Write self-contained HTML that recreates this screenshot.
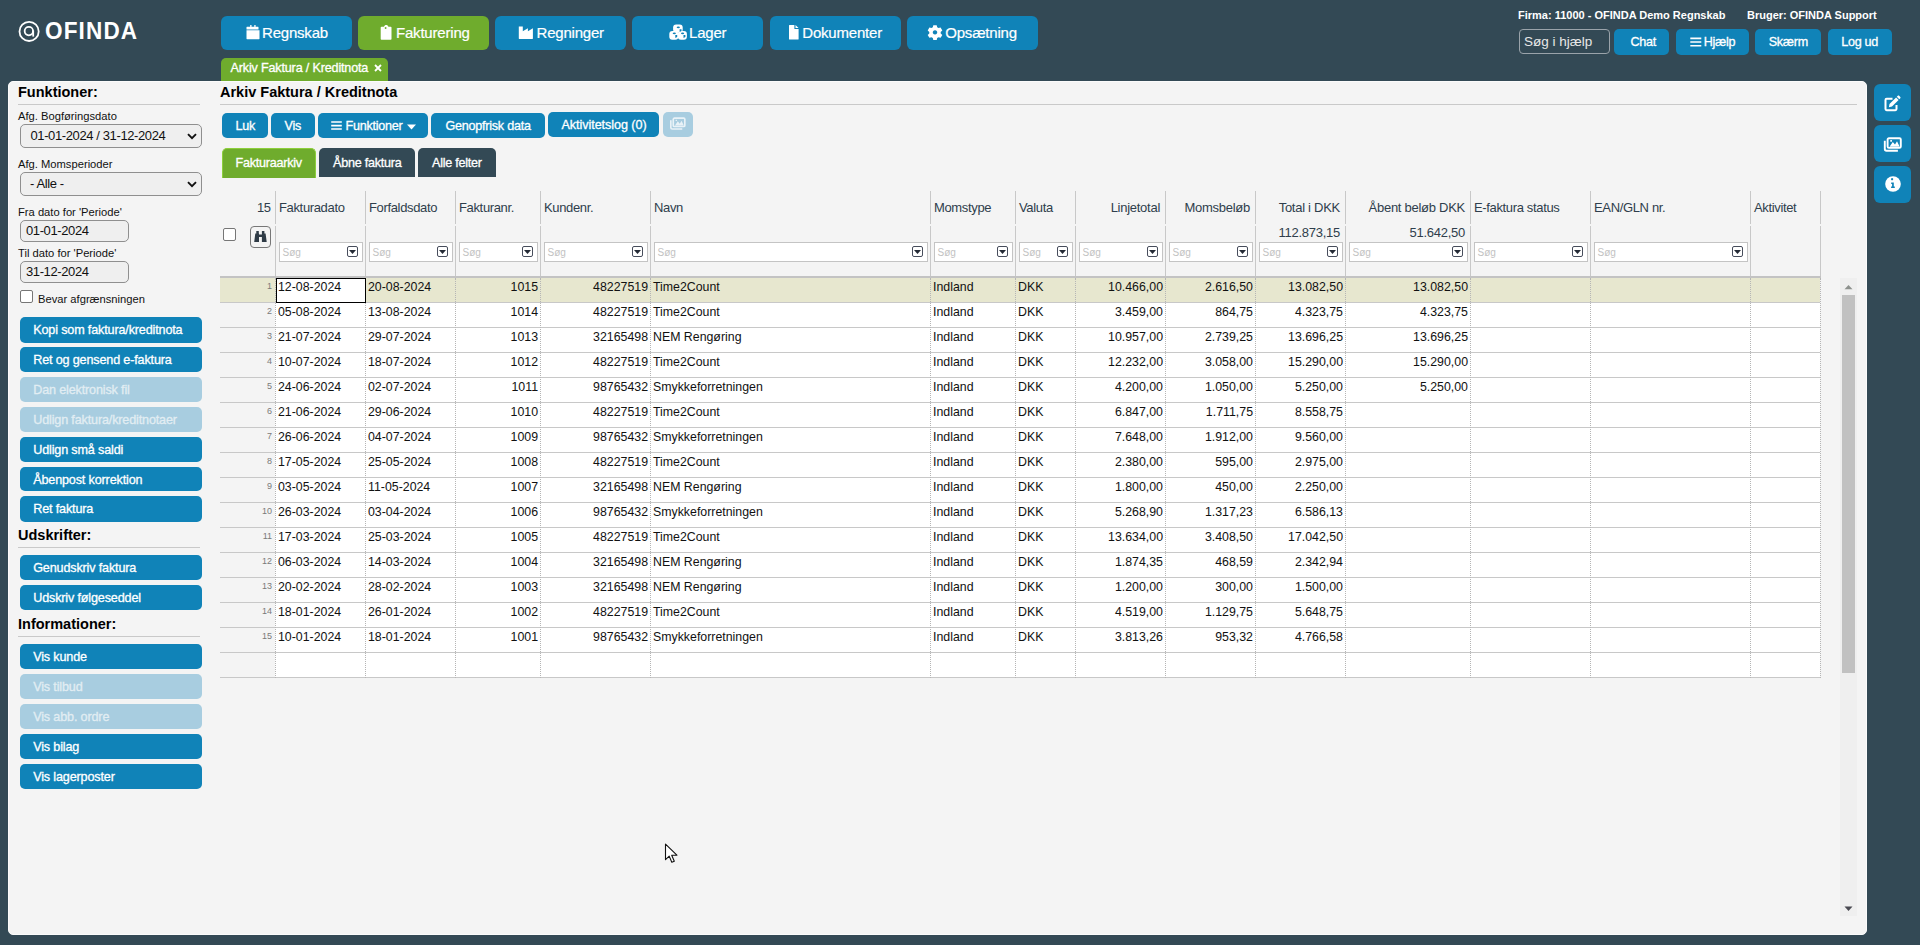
<!DOCTYPE html><html><head><meta charset="utf-8"><style>
*{box-sizing:border-box}
html,body{margin:0;padding:0;width:1920px;height:945px;overflow:hidden;background:#334955;font-family:"Liberation Sans",sans-serif}
.a{position:absolute}
.t{position:absolute;line-height:1;white-space:nowrap}
.w{color:#fff}
.b{font-weight:bold}
</style></head><body>
<svg class="a" style="left:15px;top:18px" width="28" height="28" viewBox="15 18 28 28"><circle cx="29.1" cy="31.4" r="9.6" fill="none" stroke="#fff" stroke-width="1.8"/><circle cx="28.85" cy="31.1" r="4.2" fill="none" stroke="#fff" stroke-width="1.8"/><path d="M33.2 30.5V36.6" stroke="#fff" stroke-width="1.8"/></svg>
<div class="t" style="left:45px;top:18.96px;font-size:24.5px;color:#fff;font-weight:bold;letter-spacing:1.25px;transform:scaleX(0.92);transform-origin:0 0">OFINDA</div>
<div class="a" style="left:221px;top:16px;width:131px;height:34px;border-radius:6px;background:#1083b8"></div>
<div class="a" style="left:245px;top:24px;line-height:0"><svg width="16" height="16" viewBox="0 0 16 16"><path fill="#fff" d="M3 2.75h2.2V1h1.3v1.75h2.8V1h1.3v1.75h2.4c.4 0 .5.2.5.5v2.3H1.5v-2.3c0-.3.1-.5.5-.5H3zM1.5 6.3h13v8.4c0 .3-.2.5-.5.5H2c-.3 0-.5-.2-.5-.5z"/></svg></div>
<div class="t" style="left:262px;top:24.80px;font-size:15px;color:#fff;letter-spacing:-0.2px;-webkit-text-stroke:0.2px #fff">Regnskab</div>
<div class="a" style="left:358px;top:16px;width:131px;height:34px;border-radius:6px;background:#6fac2d"></div>
<div class="a" style="left:378px;top:24px;line-height:0"><svg width="16" height="16" viewBox="0 0 16 16"><path fill="#fff" fill-rule="evenodd" d="M6 2.7C6.4 1.5 7.1 1 8.2 1s1.8.5 2.2 1.7h2.3c.5 0 .8.3.8.8V15c0 .5-.3.8-.8.8H3.5c-.5 0-.8-.3-.8-.8V3.5c0-.5.3-.8.8-.8zM8.5 4a.9.9 0 1 0 0 .01z"/></svg></div>
<div class="t" style="left:396px;top:24.80px;font-size:15px;color:#fff;letter-spacing:-0.2px;-webkit-text-stroke:0.2px #fff">Fakturering</div>
<div class="a" style="left:495px;top:16px;width:131px;height:34px;border-radius:6px;background:#1083b8"></div>
<div class="a" style="left:517px;top:24px;line-height:0"><svg width="16" height="16" viewBox="0 0 16 16"><path fill="#fff" d="M1.8 2.6h4v4.6l5.1-3v3.1l5-3.1v10.2c0 .3-.2.5-.5.5H2.3c-.3 0-.5-.2-.5-.5z"/></svg></div>
<div class="t" style="left:536.5px;top:24.80px;font-size:15px;color:#fff;letter-spacing:-0.2px;-webkit-text-stroke:0.2px #fff">Regninger</div>
<div class="a" style="left:632px;top:16px;width:131px;height:34px;border-radius:6px;background:#1083b8"></div>
<div class="a" style="left:667px;top:22px;line-height:0"><svg width="22" height="20" viewBox="667 22 22 20"><g fill="#fff"><rect x="673.1" y="24.6" width="9.6" height="8" rx="3"/><rect x="669.3" y="30.9" width="9" height="8.9" rx="3"/><rect x="677.9" y="30.9" width="9" height="8.9" rx="3"/></g><g fill="#1083b8"><ellipse cx="678.3" cy="27.3" rx="1.6" ry="0.9"/><ellipse cx="674.3" cy="33.3" rx="1.6" ry="0.9"/><ellipse cx="682.6" cy="33.3" rx="1.6" ry="0.9"/><path d="M679.6 29.2h1.9v1.9l-1.9 1z"/><path d="M675.3 35h1.9v2l-1.9 1z"/><path d="M683.5 35h1.9v2l-1.9 1z"/></g></svg></div>
<div class="t" style="left:689px;top:24.80px;font-size:15px;color:#fff;letter-spacing:-0.2px;-webkit-text-stroke:0.2px #fff">Lager</div>
<div class="a" style="left:770px;top:16px;width:131px;height:34px;border-radius:6px;background:#1083b8"></div>
<div class="a" style="left:786px;top:24px;line-height:0"><svg width="16" height="16" viewBox="0 0 16 16"><path fill="#fff" d="M3.5 1h4.9v4h4.2v9.9c0 .3-.3.6-.6.6H3.5c-.3 0-.5-.3-.5-.6V1.6c0-.3.2-.6.5-.6zM9.5 1l3.1 3H9.5z"/></svg></div>
<div class="t" style="left:802.25px;top:24.80px;font-size:15px;color:#fff;letter-spacing:-0.2px;-webkit-text-stroke:0.2px #fff">Dokumenter</div>
<div class="a" style="left:907px;top:16px;width:131px;height:34px;border-radius:6px;background:#1083b8"></div>
<div class="a" style="left:927px;top:24px;line-height:0"><svg width="16" height="16" viewBox="0 0 16 16"><path fill="#fff" fill-rule="evenodd" d="M6.3 1.2h3.4l.5 2.1 1.3.8 2.1-.6 1.7 2.9-1.6 1.5v1.5l1.6 1.5-1.7 2.9-2.1-.6-1.3.8-.5 2.1H6.3l-.5-2.1-1.3-.8-2.1.6-1.7-2.9 1.6-1.5V7.9L.7 6.4l1.7-2.9 2.1.6 1.3-.8zM8 6.2a2.2 2.2 0 1 0 .01 0z"/></svg></div>
<div class="t" style="left:945.25px;top:24.80px;font-size:15px;color:#fff;letter-spacing:-0.2px;-webkit-text-stroke:0.2px #fff">Opsætning</div>
<div class="a" style="left:221px;top:58px;width:167px;height:23px;background:#6fac2d;border-radius:5px 5px 0 0"></div>
<div class="t" style="left:230.5px;top:61.83px;font-size:12.6px;color:#fff;-webkit-text-stroke:0.3px #fff;letter-spacing:-0.17px">Arkiv Faktura / Kreditnota</div>
<svg class="a" style="left:374px;top:64px" width="8" height="8" viewBox="0 0 8 8"><path d="M1 1L7 7M7 1L1 7" stroke="#fff" stroke-width="1.8"/></svg>
<div class="t" style="left:1518px;top:10.19px;font-size:11px;color:#fff;font-weight:bold">Firma: 11000 - OFINDA Demo Regnskab</div>
<div class="t" style="left:1747px;top:10.19px;font-size:11px;color:#fff;font-weight:bold">Bruger: OFINDA Support</div>
<div class="a" style="left:1519px;top:29px;width:91px;height:25px;border:1px solid #9aa3aa;border-radius:4px"></div>
<div class="t" style="left:1524px;top:34.82px;font-size:13.5px;color:#e8e8e8">Søg i hjælp</div>
<div class="a" style="left:1614px;top:29px;width:55px;height:26px;border-radius:5px;background:#1083b8"></div>
<div class="t" style="left:1630.5px;top:35.83px;font-size:12.6px;color:#fff;-webkit-text-stroke:0.3px #fff;letter-spacing:-0.3px">Chat</div>
<div class="a" style="left:1676px;top:29px;width:73px;height:26px;border-radius:5px;background:#1083b8"></div>
<div class="t" style="left:1703.75px;top:35.83px;font-size:12.6px;color:#fff;-webkit-text-stroke:0.3px #fff;letter-spacing:-0.3px">Hjælp</div>
<div class="a" style="left:1755px;top:29px;width:66px;height:26px;border-radius:5px;background:#1083b8"></div>
<div class="t" style="left:1768.75px;top:35.83px;font-size:12.6px;color:#fff;-webkit-text-stroke:0.3px #fff;letter-spacing:-0.3px">Skærm</div>
<div class="a" style="left:1828px;top:29px;width:64px;height:26px;border-radius:5px;background:#1083b8"></div>
<div class="t" style="left:1841.25px;top:35.83px;font-size:12.6px;color:#fff;-webkit-text-stroke:0.3px #fff;letter-spacing:-0.3px">Log ud</div>
<svg class="a" style="left:1689.5px;top:36.5px" width="12" height="11" viewBox="0 0 12 11"><path d="M0.3 1.4h11M0.3 5h11M0.3 8.7h11" stroke="#fff" stroke-width="1.6"/></svg>
<div class="a" style="left:8px;top:81px;width:1859px;height:854px;background:#f4f4f4;border:1px solid #fbfbfb;border-radius:5px"></div>
<div class="a" style="left:1874px;top:84px;width:37px;height:37px;border-radius:6px;background:#1083b8"></div>
<div class="a" style="left:1883px;top:94.5px;line-height:0"><svg width="18" height="18" viewBox="0 0 18 18"><path d="M9.5 3.8H3.6c-.7 0-1.1.4-1.1 1.1v9.2c0 .7.4 1.1 1.1 1.1h8.8c.7 0 1.1-.4 1.1-1.1V10" fill="none" stroke="#fff" stroke-width="2"/><path fill="#fff" d="M5.9 12.2l.6-3.1 6.6-6.6 2.5 2.5-6.6 6.6zM13.8 1.8l1-1c.4-.4 1-.4 1.3 0l1.2 1.2c.4.4.4.9 0 1.3l-1 1z"/></svg></div>
<div class="a" style="left:1874px;top:125px;width:37px;height:37px;border-radius:6px;background:#1083b8"></div>
<div class="a" style="left:1883px;top:136.5px;line-height:0"><svg width="20" height="16" viewBox="0 0 20 16"><rect x="4.6" y="1.3" width="13.2" height="9.6" rx="1.3" fill="none" stroke="#fff" stroke-width="1.9"/><path fill="#fff" d="M6.5 9.7l3.3-4.8 2.2 2.7 2-3.3 2.7 5.4zM7.3 3.1h1.6v1.6H7.3z"/><path d="M1.8 3.8v8.2c0 1 .6 1.7 1.7 1.7h11.4" fill="none" stroke="#fff" stroke-width="1.9"/></svg></div>
<div class="a" style="left:1874px;top:166px;width:37px;height:37px;border-radius:6px;background:#1083b8"></div>
<div class="a" style="left:1883.5px;top:175px;line-height:0"><svg width="18" height="18" viewBox="0 0 18 18"><circle cx="9" cy="9" r="7.8" fill="#fff"/><path fill="#1083b8" d="M8.1 5.2a1.1 1.1 0 1 1 .01 0zM7.2 7.5h2.6v4h1v1.4H7.1v-1.4h1v-2.6h-.9z"/></svg></div>
<div class="t" style="left:18px;top:84.73px;font-size:14.5px;font-weight:bold;color:#000">Funktioner:</div>
<div class="a" style="left:18px;top:104px;width:182px;height:1px;background:#c9c9c9"></div>
<div class="t" style="left:18px;top:111.02px;font-size:11.2px;color:#111">Afg. Bogføringsdato</div>
<div class="a" style="left:20px;top:124px;width:182px;height:24px;border:1px solid #8f8f8f;border-radius:5px;background:#efefef"></div><div class="t" style="left:30.5px;top:128.50px;font-size:13px;color:#111;letter-spacing:-0.39px">01-01-2024 / 31-12-2024</div><div class="a" style="left:187px;top:132.5px;line-height:0"><svg width="10" height="7" viewBox="0 0 10 7"><path d="M1 1.2l4 4 4-4" fill="none" stroke="#111" stroke-width="1.9"/></svg></div>
<div class="t" style="left:18px;top:159.27px;font-size:11.2px;color:#111">Afg. Momsperioder</div>
<div class="a" style="left:20px;top:172px;width:182px;height:24px;border:1px solid #8f8f8f;border-radius:5px;background:#efefef"></div><div class="t" style="left:30px;top:176.50px;font-size:13px;color:#111;letter-spacing:-0.39px">- Alle -</div><div class="a" style="left:187px;top:180.5px;line-height:0"><svg width="10" height="7" viewBox="0 0 10 7"><path d="M1 1.2l4 4 4-4" fill="none" stroke="#111" stroke-width="1.9"/></svg></div>
<div class="t" style="left:18px;top:207.02px;font-size:11.2px;color:#111">Fra dato for 'Periode'</div>
<div class="a" style="left:20px;top:220px;width:109px;height:22px;border:1px solid #8f8f8f;border-radius:5px;background:#efefef"></div><div class="t" style="left:26px;top:223.50px;font-size:13px;color:#111;letter-spacing:-0.39px">01-01-2024</div>
<div class="t" style="left:18px;top:248.02px;font-size:11.2px;color:#111">Til dato for 'Periode'</div>
<div class="a" style="left:20px;top:261px;width:109px;height:22px;border:1px solid #8f8f8f;border-radius:5px;background:#efefef"></div><div class="t" style="left:26px;top:264.50px;font-size:13px;color:#111;letter-spacing:-0.39px">31-12-2024</div>
<div class="a" style="left:20px;top:290px;width:13px;height:13px;border:1px solid #767676;border-radius:2px;background:#fff"></div>
<div class="t" style="left:38px;top:293.77px;font-size:11.2px;color:#111">Bevar afgrænsningen</div>
<div class="a" style="left:20px;top:317px;width:182px;height:26px;border-radius:5px;background:#1083b8"></div><div class="t" style="left:33.2px;top:323.93px;font-size:12.6px;color:#fff;-webkit-text-stroke:0.3px #fff;letter-spacing:-0.15px">Kopi som faktura/kreditnota</div>
<div class="a" style="left:20px;top:347px;width:182px;height:25px;border-radius:5px;background:#1083b8"></div><div class="t" style="left:33.2px;top:353.93px;font-size:12.6px;color:#fff;-webkit-text-stroke:0.3px #fff;letter-spacing:-0.15px">Ret og gensend e-faktura</div>
<div class="a" style="left:20px;top:377px;width:182px;height:25px;border-radius:5px;background:#a8cde0"></div><div class="t" style="left:33.2px;top:383.93px;font-size:12.6px;color:#e2edf3;-webkit-text-stroke:0.3px #e2edf3;letter-spacing:-0.15px">Dan elektronisk fil</div>
<div class="a" style="left:20px;top:407px;width:182px;height:25px;border-radius:5px;background:#a8cde0"></div><div class="t" style="left:33.2px;top:413.93px;font-size:12.6px;color:#e2edf3;-webkit-text-stroke:0.3px #e2edf3;letter-spacing:-0.15px">Udlign faktura/kreditnotaer</div>
<div class="a" style="left:20px;top:437px;width:182px;height:25px;border-radius:5px;background:#1083b8"></div><div class="t" style="left:33.2px;top:443.93px;font-size:12.6px;color:#fff;-webkit-text-stroke:0.3px #fff;letter-spacing:-0.15px">Udlign små saldi</div>
<div class="a" style="left:20px;top:467px;width:182px;height:24px;border-radius:5px;background:#1083b8"></div><div class="t" style="left:33.2px;top:473.93px;font-size:12.6px;color:#fff;-webkit-text-stroke:0.3px #fff;letter-spacing:-0.15px">Åbenpost korrektion</div>
<div class="a" style="left:20px;top:496px;width:182px;height:26px;border-radius:5px;background:#1083b8"></div><div class="t" style="left:33.2px;top:502.93px;font-size:12.6px;color:#fff;-webkit-text-stroke:0.3px #fff;letter-spacing:-0.15px">Ret faktura</div>
<div class="t" style="left:18px;top:528.23px;font-size:14.5px;font-weight:bold;color:#000">Udskrifter:</div>
<div class="a" style="left:18px;top:547px;width:182px;height:1px;background:#c9c9c9"></div>
<div class="a" style="left:20px;top:555px;width:182px;height:25px;border-radius:5px;background:#1083b8"></div><div class="t" style="left:33.2px;top:561.93px;font-size:12.6px;color:#fff;-webkit-text-stroke:0.3px #fff;letter-spacing:-0.15px">Genudskriv faktura</div>
<div class="a" style="left:20px;top:585px;width:182px;height:25px;border-radius:5px;background:#1083b8"></div><div class="t" style="left:33.2px;top:591.93px;font-size:12.6px;color:#fff;-webkit-text-stroke:0.3px #fff;letter-spacing:-0.15px">Udskriv følgeseddel</div>
<div class="t" style="left:18px;top:616.73px;font-size:14.5px;font-weight:bold;color:#000">Informationer:</div>
<div class="a" style="left:18px;top:636px;width:182px;height:1px;background:#c9c9c9"></div>
<div class="a" style="left:20px;top:644px;width:182px;height:25px;border-radius:5px;background:#1083b8"></div><div class="t" style="left:33.2px;top:650.93px;font-size:12.6px;color:#fff;-webkit-text-stroke:0.3px #fff;letter-spacing:-0.15px">Vis kunde</div>
<div class="a" style="left:20px;top:674px;width:182px;height:25px;border-radius:5px;background:#a8cde0"></div><div class="t" style="left:33.2px;top:680.93px;font-size:12.6px;color:#e2edf3;-webkit-text-stroke:0.3px #e2edf3;letter-spacing:-0.15px">Vis tilbud</div>
<div class="a" style="left:20px;top:704px;width:182px;height:25px;border-radius:5px;background:#a8cde0"></div><div class="t" style="left:33.2px;top:710.93px;font-size:12.6px;color:#e2edf3;-webkit-text-stroke:0.3px #e2edf3;letter-spacing:-0.15px">Vis abb. ordre</div>
<div class="a" style="left:20px;top:734px;width:182px;height:25px;border-radius:5px;background:#1083b8"></div><div class="t" style="left:33.2px;top:740.93px;font-size:12.6px;color:#fff;-webkit-text-stroke:0.3px #fff;letter-spacing:-0.15px">Vis bilag</div>
<div class="a" style="left:20px;top:764px;width:182px;height:25px;border-radius:5px;background:#1083b8"></div><div class="t" style="left:33.2px;top:770.93px;font-size:12.6px;color:#fff;-webkit-text-stroke:0.3px #fff;letter-spacing:-0.15px">Vis lagerposter</div>
<div class="t" style="left:220px;top:84.73px;font-size:14.5px;font-weight:bold;color:#000">Arkiv Faktura / Kreditnota</div>
<div class="a" style="left:220px;top:104px;width:1637px;height:1px;background:#c9c9c9"></div>
<div class="a" style="left:222px;top:113px;width:46px;height:25px;border-radius:5px;background:#1083b8"></div><div class="t" style="left:235.5px;top:119.93px;font-size:12.6px;color:#fff;-webkit-text-stroke:0.3px #fff;letter-spacing:-0.25px">Luk</div>
<div class="a" style="left:271px;top:113px;width:44px;height:25px;border-radius:5px;background:#1083b8"></div><div class="t" style="left:284.5px;top:119.93px;font-size:12.6px;color:#fff;-webkit-text-stroke:0.3px #fff;letter-spacing:-0.25px">Vis</div>
<div class="a" style="left:318px;top:113px;width:110px;height:25px;border-radius:5px;background:#1083b8"></div><div class="t" style="left:345.5px;top:119.93px;font-size:12.6px;color:#fff;-webkit-text-stroke:0.3px #fff;letter-spacing:-0.25px">Funktioner</div>
<svg class="a" style="left:331px;top:120px" width="11" height="11" viewBox="0 0 11 11"><path d="M0.2 2h10.6M0.2 5.6h10.6M0.2 9h10.6" stroke="#fff" stroke-width="1.6"/></svg>
<svg class="a" style="left:406.5px;top:123.7px" width="9" height="6" viewBox="0 0 9 6"><path d="M0 0.5h9L4.5 5.5z" fill="#fff"/></svg>
<div class="a" style="left:431px;top:113px;width:114px;height:25px;border-radius:5px;background:#1083b8"></div><div class="t" style="left:445.5px;top:119.93px;font-size:12.6px;color:#fff;-webkit-text-stroke:0.3px #fff;letter-spacing:-0.25px">Genopfrisk data</div>
<div class="a" style="left:548px;top:112px;width:111px;height:25px;border-radius:5px;background:#1083b8"></div><div class="t" style="left:561.5px;top:118.93px;font-size:12.6px;color:#fff;-webkit-text-stroke:0.3px #fff;letter-spacing:-0.06px">Aktivitetslog (0)</div>
<div class="a" style="left:663px;top:112px;width:30px;height:25px;border-radius:5px;background:#a8cde0"></div>
<div class="a" style="left:669px;top:117px;line-height:0;opacity:0.75"><svg width="18" height="14" viewBox="0 0 20 16"><rect x="4.6" y="1.3" width="13.2" height="9.6" rx="1.3" fill="none" stroke="#fff" stroke-width="1.9"/><path fill="#fff" d="M6.5 9.7l3.3-4.8 2.2 2.7 2-3.3 2.7 5.4zM7.3 3.1h1.6v1.6H7.3z"/><path d="M1.8 3.8v8.2c0 1 .6 1.7 1.7 1.7h11.4" fill="none" stroke="#fff" stroke-width="1.9"/></svg></div>
<div class="a" style="left:222px;top:148px;width:94px;height:30px;border-radius:5px 5px 0 0;background:#6fac2d;border:1px solid #8dcf3c;border-bottom:none"></div>
<div class="t" style="left:235.5px;top:156.73px;font-size:12.6px;color:#fff;-webkit-text-stroke:0.3px #fff;letter-spacing:-0.25px">Fakturaarkiv</div>
<div class="a" style="left:319px;top:148px;width:96px;height:29px;border-radius:5px 5px 0 0;background:#334955"></div>
<div class="t" style="left:333px;top:156.73px;font-size:12.6px;color:#fff;-webkit-text-stroke:0.3px #fff;letter-spacing:-0.25px">Åbne faktura</div>
<div class="a" style="left:418px;top:148px;width:78px;height:29px;border-radius:5px 5px 0 0;background:#334955"></div>
<div class="t" style="left:432px;top:156.73px;font-size:12.6px;color:#fff;-webkit-text-stroke:0.3px #fff;letter-spacing:-0.25px">Alle felter</div>
<div class="a" style="left:275px;top:191px;width:1px;height:33px;background:#c8c8c8"></div>
<div class="a" style="left:275px;top:226px;width:1px;height:50px;background:#c8c8c8"></div>
<div class="a" style="left:365px;top:191px;width:1px;height:33px;background:#c8c8c8"></div>
<div class="a" style="left:365px;top:226px;width:1px;height:50px;background:#c8c8c8"></div>
<div class="a" style="left:455px;top:191px;width:1px;height:33px;background:#c8c8c8"></div>
<div class="a" style="left:455px;top:226px;width:1px;height:50px;background:#c8c8c8"></div>
<div class="a" style="left:540px;top:191px;width:1px;height:33px;background:#c8c8c8"></div>
<div class="a" style="left:540px;top:226px;width:1px;height:50px;background:#c8c8c8"></div>
<div class="a" style="left:650px;top:191px;width:1px;height:33px;background:#c8c8c8"></div>
<div class="a" style="left:650px;top:226px;width:1px;height:50px;background:#c8c8c8"></div>
<div class="a" style="left:930px;top:191px;width:1px;height:33px;background:#c8c8c8"></div>
<div class="a" style="left:930px;top:226px;width:1px;height:50px;background:#c8c8c8"></div>
<div class="a" style="left:1015px;top:191px;width:1px;height:33px;background:#c8c8c8"></div>
<div class="a" style="left:1015px;top:226px;width:1px;height:50px;background:#c8c8c8"></div>
<div class="a" style="left:1075px;top:191px;width:1px;height:33px;background:#c8c8c8"></div>
<div class="a" style="left:1075px;top:226px;width:1px;height:50px;background:#c8c8c8"></div>
<div class="a" style="left:1165px;top:191px;width:1px;height:33px;background:#c8c8c8"></div>
<div class="a" style="left:1165px;top:226px;width:1px;height:50px;background:#c8c8c8"></div>
<div class="a" style="left:1255px;top:191px;width:1px;height:33px;background:#c8c8c8"></div>
<div class="a" style="left:1255px;top:226px;width:1px;height:50px;background:#c8c8c8"></div>
<div class="a" style="left:1345px;top:191px;width:1px;height:33px;background:#c8c8c8"></div>
<div class="a" style="left:1345px;top:226px;width:1px;height:50px;background:#c8c8c8"></div>
<div class="a" style="left:1470px;top:191px;width:1px;height:33px;background:#c8c8c8"></div>
<div class="a" style="left:1470px;top:226px;width:1px;height:50px;background:#c8c8c8"></div>
<div class="a" style="left:1590px;top:191px;width:1px;height:33px;background:#c8c8c8"></div>
<div class="a" style="left:1590px;top:226px;width:1px;height:50px;background:#c8c8c8"></div>
<div class="a" style="left:1750px;top:191px;width:1px;height:33px;background:#c8c8c8"></div>
<div class="a" style="left:1750px;top:226px;width:1px;height:50px;background:#c8c8c8"></div>
<div class="a" style="left:1820px;top:191px;width:1px;height:33px;background:#c8c8c8"></div>
<div class="a" style="left:1820px;top:226px;width:1px;height:50px;background:#c8c8c8"></div>
<div class="t" style="left:257px;top:201.25px;font-size:13px;color:#2f3e4c;letter-spacing:-0.6px">15</div>
<div class="a" style="left:223px;top:228px;width:13px;height:13px;border:1px solid #767676;border-radius:2px;background:#fff"></div>
<div class="a" style="left:250px;top:226px;width:21px;height:22px;border:1px solid #777;border-radius:4px"></div>
<svg class="a" style="left:254px;top:231px" width="13" height="11" viewBox="0 0 13 11"><path fill="#2f3b46" d="M2.3 0H4.8V2.6H2.3zM1.3 2.6H5V11H0.2zM7.9 0H10.4V2.6H7.9zM7.9 2.6H11.6L12.7 11H7.9zM5 3.6H7.9V5.9H5z"/></svg>
<div class="t" style="left:279px;top:201.25px;font-size:13px;color:#2f3e4c;letter-spacing:-0.35px">Fakturadato</div>
<div class="a" style="left:279px;top:242px;width:84px;height:20px;border:1px solid #c4c4c4;background:#fff"></div>
<div class="t" style="left:282.5px;top:247.78px;font-size:10px;color:#c2c2c2">Søg</div>
<div class="a" style="left:347px;top:246px;width:11px;height:11px;border:1px solid #474d5c;border-radius:2px;background:#fff"></div>
<svg class="a" style="left:349px;top:250px" width="7" height="4" viewBox="0 0 7 4"><path d="M0 0h7L3.5 4z" fill="#242a35"/></svg>
<div class="t" style="left:369px;top:201.25px;font-size:13px;color:#2f3e4c;letter-spacing:-0.35px">Forfaldsdato</div>
<div class="a" style="left:369px;top:242px;width:84px;height:20px;border:1px solid #c4c4c4;background:#fff"></div>
<div class="t" style="left:372.5px;top:247.78px;font-size:10px;color:#c2c2c2">Søg</div>
<div class="a" style="left:437px;top:246px;width:11px;height:11px;border:1px solid #474d5c;border-radius:2px;background:#fff"></div>
<svg class="a" style="left:439px;top:250px" width="7" height="4" viewBox="0 0 7 4"><path d="M0 0h7L3.5 4z" fill="#242a35"/></svg>
<div class="t" style="left:459px;top:201.25px;font-size:13px;color:#2f3e4c;letter-spacing:-0.35px">Fakturanr.</div>
<div class="a" style="left:459px;top:242px;width:79px;height:20px;border:1px solid #c4c4c4;background:#fff"></div>
<div class="t" style="left:462.5px;top:247.78px;font-size:10px;color:#c2c2c2">Søg</div>
<div class="a" style="left:522px;top:246px;width:11px;height:11px;border:1px solid #474d5c;border-radius:2px;background:#fff"></div>
<svg class="a" style="left:524px;top:250px" width="7" height="4" viewBox="0 0 7 4"><path d="M0 0h7L3.5 4z" fill="#242a35"/></svg>
<div class="t" style="left:544px;top:201.25px;font-size:13px;color:#2f3e4c;letter-spacing:-0.35px">Kundenr.</div>
<div class="a" style="left:544px;top:242px;width:104px;height:20px;border:1px solid #c4c4c4;background:#fff"></div>
<div class="t" style="left:547.5px;top:247.78px;font-size:10px;color:#c2c2c2">Søg</div>
<div class="a" style="left:632px;top:246px;width:11px;height:11px;border:1px solid #474d5c;border-radius:2px;background:#fff"></div>
<svg class="a" style="left:634px;top:250px" width="7" height="4" viewBox="0 0 7 4"><path d="M0 0h7L3.5 4z" fill="#242a35"/></svg>
<div class="t" style="left:654px;top:201.25px;font-size:13px;color:#2f3e4c;letter-spacing:-0.35px">Navn</div>
<div class="a" style="left:654px;top:242px;width:274px;height:20px;border:1px solid #c4c4c4;background:#fff"></div>
<div class="t" style="left:657.5px;top:247.78px;font-size:10px;color:#c2c2c2">Søg</div>
<div class="a" style="left:912px;top:246px;width:11px;height:11px;border:1px solid #474d5c;border-radius:2px;background:#fff"></div>
<svg class="a" style="left:914px;top:250px" width="7" height="4" viewBox="0 0 7 4"><path d="M0 0h7L3.5 4z" fill="#242a35"/></svg>
<div class="t" style="left:934px;top:201.25px;font-size:13px;color:#2f3e4c;letter-spacing:-0.35px">Momstype</div>
<div class="a" style="left:934px;top:242px;width:79px;height:20px;border:1px solid #c4c4c4;background:#fff"></div>
<div class="t" style="left:937.5px;top:247.78px;font-size:10px;color:#c2c2c2">Søg</div>
<div class="a" style="left:997px;top:246px;width:11px;height:11px;border:1px solid #474d5c;border-radius:2px;background:#fff"></div>
<svg class="a" style="left:999px;top:250px" width="7" height="4" viewBox="0 0 7 4"><path d="M0 0h7L3.5 4z" fill="#242a35"/></svg>
<div class="t" style="left:1019px;top:201.25px;font-size:13px;color:#2f3e4c;letter-spacing:-0.35px">Valuta</div>
<div class="a" style="left:1019px;top:242px;width:54px;height:20px;border:1px solid #c4c4c4;background:#fff"></div>
<div class="t" style="left:1022.5px;top:247.78px;font-size:10px;color:#c2c2c2">Søg</div>
<div class="a" style="left:1057px;top:246px;width:11px;height:11px;border:1px solid #474d5c;border-radius:2px;background:#fff"></div>
<svg class="a" style="left:1059px;top:250px" width="7" height="4" viewBox="0 0 7 4"><path d="M0 0h7L3.5 4z" fill="#242a35"/></svg>
<div class="t" style="left:1075px;top:201.25px;font-size:13px;width:85px;text-align:right;color:#2f3e4c;letter-spacing:-0.27px">Linjetotal</div>
<div class="a" style="left:1079px;top:242px;width:84px;height:20px;border:1px solid #c4c4c4;background:#fff"></div>
<div class="t" style="left:1082.5px;top:247.78px;font-size:10px;color:#c2c2c2">Søg</div>
<div class="a" style="left:1147px;top:246px;width:11px;height:11px;border:1px solid #474d5c;border-radius:2px;background:#fff"></div>
<svg class="a" style="left:1149px;top:250px" width="7" height="4" viewBox="0 0 7 4"><path d="M0 0h7L3.5 4z" fill="#242a35"/></svg>
<div class="t" style="left:1165px;top:201.25px;font-size:13px;width:85px;text-align:right;color:#2f3e4c;letter-spacing:-0.27px">Momsbeløb</div>
<div class="a" style="left:1169px;top:242px;width:84px;height:20px;border:1px solid #c4c4c4;background:#fff"></div>
<div class="t" style="left:1172.5px;top:247.78px;font-size:10px;color:#c2c2c2">Søg</div>
<div class="a" style="left:1237px;top:246px;width:11px;height:11px;border:1px solid #474d5c;border-radius:2px;background:#fff"></div>
<svg class="a" style="left:1239px;top:250px" width="7" height="4" viewBox="0 0 7 4"><path d="M0 0h7L3.5 4z" fill="#242a35"/></svg>
<div class="t" style="left:1255px;top:201.25px;font-size:13px;width:85px;text-align:right;color:#2f3e4c;letter-spacing:-0.27px">Total i DKK</div>
<div class="t" style="left:1255px;top:226.00px;font-size:13px;width:85px;text-align:right;color:#2f3e4c;letter-spacing:-0.27px">112.873,15</div>
<div class="a" style="left:1259px;top:242px;width:84px;height:20px;border:1px solid #c4c4c4;background:#fff"></div>
<div class="t" style="left:1262.5px;top:247.78px;font-size:10px;color:#c2c2c2">Søg</div>
<div class="a" style="left:1327px;top:246px;width:11px;height:11px;border:1px solid #474d5c;border-radius:2px;background:#fff"></div>
<svg class="a" style="left:1329px;top:250px" width="7" height="4" viewBox="0 0 7 4"><path d="M0 0h7L3.5 4z" fill="#242a35"/></svg>
<div class="t" style="left:1345px;top:201.25px;font-size:13px;width:120px;text-align:right;color:#2f3e4c;letter-spacing:-0.27px">Åbent beløb DKK</div>
<div class="t" style="left:1345px;top:226.00px;font-size:13px;width:120px;text-align:right;color:#2f3e4c;letter-spacing:-0.27px">51.642,50</div>
<div class="a" style="left:1349px;top:242px;width:119px;height:20px;border:1px solid #c4c4c4;background:#fff"></div>
<div class="t" style="left:1352.5px;top:247.78px;font-size:10px;color:#c2c2c2">Søg</div>
<div class="a" style="left:1452px;top:246px;width:11px;height:11px;border:1px solid #474d5c;border-radius:2px;background:#fff"></div>
<svg class="a" style="left:1454px;top:250px" width="7" height="4" viewBox="0 0 7 4"><path d="M0 0h7L3.5 4z" fill="#242a35"/></svg>
<div class="t" style="left:1474px;top:201.25px;font-size:13px;color:#2f3e4c;letter-spacing:-0.35px">E-faktura status</div>
<div class="a" style="left:1474px;top:242px;width:114px;height:20px;border:1px solid #c4c4c4;background:#fff"></div>
<div class="t" style="left:1477.5px;top:247.78px;font-size:10px;color:#c2c2c2">Søg</div>
<div class="a" style="left:1572px;top:246px;width:11px;height:11px;border:1px solid #474d5c;border-radius:2px;background:#fff"></div>
<svg class="a" style="left:1574px;top:250px" width="7" height="4" viewBox="0 0 7 4"><path d="M0 0h7L3.5 4z" fill="#242a35"/></svg>
<div class="t" style="left:1594px;top:201.25px;font-size:13px;color:#2f3e4c;letter-spacing:-0.35px">EAN/GLN nr.</div>
<div class="a" style="left:1594px;top:242px;width:154px;height:20px;border:1px solid #c4c4c4;background:#fff"></div>
<div class="t" style="left:1597.5px;top:247.78px;font-size:10px;color:#c2c2c2">Søg</div>
<div class="a" style="left:1732px;top:246px;width:11px;height:11px;border:1px solid #474d5c;border-radius:2px;background:#fff"></div>
<svg class="a" style="left:1734px;top:250px" width="7" height="4" viewBox="0 0 7 4"><path d="M0 0h7L3.5 4z" fill="#242a35"/></svg>
<div class="t" style="left:1754px;top:201.25px;font-size:13px;color:#2f3e4c;letter-spacing:-0.35px">Aktivitet</div>
<div class="a" style="left:220px;top:276px;width:1601px;height:2px;background:#c3c3c3"></div>
<div class="a" style="left:220px;top:278px;width:1600px;height:24px;background:#e7e7cf"></div>
<div class="a" style="left:220px;top:302px;width:1600px;height:1px;background:#c8c8c8"></div>
<div class="t" style="left:220px;top:281.63px;font-size:9px;width:52px;text-align:right;color:#7a7a7a">1</div>
<div class="t" style="left:278px;top:281.05px;font-size:12.35px;color:#111">12-08-2024</div>
<div class="t" style="left:368px;top:281.05px;font-size:12.35px;color:#111">20-08-2024</div>
<div class="t" style="left:455px;top:281.05px;font-size:12.35px;width:83px;text-align:right;color:#111">1015</div>
<div class="t" style="left:540px;top:281.05px;font-size:12.35px;width:108px;text-align:right;color:#111">48227519</div>
<div class="t" style="left:653px;top:281.05px;font-size:12.35px;color:#111">Time2Count</div>
<div class="t" style="left:933px;top:281.05px;font-size:12.35px;color:#111">Indland</div>
<div class="t" style="left:1018px;top:281.05px;font-size:12.35px;color:#111">DKK</div>
<div class="t" style="left:1075px;top:281.05px;font-size:12.35px;width:88px;text-align:right;color:#111">10.466,00</div>
<div class="t" style="left:1165px;top:281.05px;font-size:12.35px;width:88px;text-align:right;color:#111">2.616,50</div>
<div class="t" style="left:1255px;top:281.05px;font-size:12.35px;width:88px;text-align:right;color:#111">13.082,50</div>
<div class="t" style="left:1345px;top:281.05px;font-size:12.35px;width:123px;text-align:right;color:#111">13.082,50</div>
<div class="a" style="left:220px;top:303px;width:1600px;height:24px;background:#fff"></div>
<div class="a" style="left:220px;top:303px;width:55px;height:24px;background:#f4f4f4"></div>
<div class="a" style="left:220px;top:327px;width:1600px;height:1px;background:#c8c8c8"></div>
<div class="t" style="left:220px;top:306.63px;font-size:9px;width:52px;text-align:right;color:#7a7a7a">2</div>
<div class="t" style="left:278px;top:306.05px;font-size:12.35px;color:#111">05-08-2024</div>
<div class="t" style="left:368px;top:306.05px;font-size:12.35px;color:#111">13-08-2024</div>
<div class="t" style="left:455px;top:306.05px;font-size:12.35px;width:83px;text-align:right;color:#111">1014</div>
<div class="t" style="left:540px;top:306.05px;font-size:12.35px;width:108px;text-align:right;color:#111">48227519</div>
<div class="t" style="left:653px;top:306.05px;font-size:12.35px;color:#111">Time2Count</div>
<div class="t" style="left:933px;top:306.05px;font-size:12.35px;color:#111">Indland</div>
<div class="t" style="left:1018px;top:306.05px;font-size:12.35px;color:#111">DKK</div>
<div class="t" style="left:1075px;top:306.05px;font-size:12.35px;width:88px;text-align:right;color:#111">3.459,00</div>
<div class="t" style="left:1165px;top:306.05px;font-size:12.35px;width:88px;text-align:right;color:#111">864,75</div>
<div class="t" style="left:1255px;top:306.05px;font-size:12.35px;width:88px;text-align:right;color:#111">4.323,75</div>
<div class="t" style="left:1345px;top:306.05px;font-size:12.35px;width:123px;text-align:right;color:#111">4.323,75</div>
<div class="a" style="left:220px;top:328px;width:1600px;height:24px;background:#fff"></div>
<div class="a" style="left:220px;top:328px;width:55px;height:24px;background:#f4f4f4"></div>
<div class="a" style="left:220px;top:352px;width:1600px;height:1px;background:#c8c8c8"></div>
<div class="t" style="left:220px;top:331.63px;font-size:9px;width:52px;text-align:right;color:#7a7a7a">3</div>
<div class="t" style="left:278px;top:331.05px;font-size:12.35px;color:#111">21-07-2024</div>
<div class="t" style="left:368px;top:331.05px;font-size:12.35px;color:#111">29-07-2024</div>
<div class="t" style="left:455px;top:331.05px;font-size:12.35px;width:83px;text-align:right;color:#111">1013</div>
<div class="t" style="left:540px;top:331.05px;font-size:12.35px;width:108px;text-align:right;color:#111">32165498</div>
<div class="t" style="left:653px;top:331.05px;font-size:12.35px;color:#111">NEM Rengøring</div>
<div class="t" style="left:933px;top:331.05px;font-size:12.35px;color:#111">Indland</div>
<div class="t" style="left:1018px;top:331.05px;font-size:12.35px;color:#111">DKK</div>
<div class="t" style="left:1075px;top:331.05px;font-size:12.35px;width:88px;text-align:right;color:#111">10.957,00</div>
<div class="t" style="left:1165px;top:331.05px;font-size:12.35px;width:88px;text-align:right;color:#111">2.739,25</div>
<div class="t" style="left:1255px;top:331.05px;font-size:12.35px;width:88px;text-align:right;color:#111">13.696,25</div>
<div class="t" style="left:1345px;top:331.05px;font-size:12.35px;width:123px;text-align:right;color:#111">13.696,25</div>
<div class="a" style="left:220px;top:353px;width:1600px;height:24px;background:#fff"></div>
<div class="a" style="left:220px;top:353px;width:55px;height:24px;background:#f4f4f4"></div>
<div class="a" style="left:220px;top:377px;width:1600px;height:1px;background:#c8c8c8"></div>
<div class="t" style="left:220px;top:356.63px;font-size:9px;width:52px;text-align:right;color:#7a7a7a">4</div>
<div class="t" style="left:278px;top:356.05px;font-size:12.35px;color:#111">10-07-2024</div>
<div class="t" style="left:368px;top:356.05px;font-size:12.35px;color:#111">18-07-2024</div>
<div class="t" style="left:455px;top:356.05px;font-size:12.35px;width:83px;text-align:right;color:#111">1012</div>
<div class="t" style="left:540px;top:356.05px;font-size:12.35px;width:108px;text-align:right;color:#111">48227519</div>
<div class="t" style="left:653px;top:356.05px;font-size:12.35px;color:#111">Time2Count</div>
<div class="t" style="left:933px;top:356.05px;font-size:12.35px;color:#111">Indland</div>
<div class="t" style="left:1018px;top:356.05px;font-size:12.35px;color:#111">DKK</div>
<div class="t" style="left:1075px;top:356.05px;font-size:12.35px;width:88px;text-align:right;color:#111">12.232,00</div>
<div class="t" style="left:1165px;top:356.05px;font-size:12.35px;width:88px;text-align:right;color:#111">3.058,00</div>
<div class="t" style="left:1255px;top:356.05px;font-size:12.35px;width:88px;text-align:right;color:#111">15.290,00</div>
<div class="t" style="left:1345px;top:356.05px;font-size:12.35px;width:123px;text-align:right;color:#111">15.290,00</div>
<div class="a" style="left:220px;top:378px;width:1600px;height:24px;background:#fff"></div>
<div class="a" style="left:220px;top:378px;width:55px;height:24px;background:#f4f4f4"></div>
<div class="a" style="left:220px;top:402px;width:1600px;height:1px;background:#c8c8c8"></div>
<div class="t" style="left:220px;top:381.63px;font-size:9px;width:52px;text-align:right;color:#7a7a7a">5</div>
<div class="t" style="left:278px;top:381.05px;font-size:12.35px;color:#111">24-06-2024</div>
<div class="t" style="left:368px;top:381.05px;font-size:12.35px;color:#111">02-07-2024</div>
<div class="t" style="left:455px;top:381.05px;font-size:12.35px;width:83px;text-align:right;color:#111">1011</div>
<div class="t" style="left:540px;top:381.05px;font-size:12.35px;width:108px;text-align:right;color:#111">98765432</div>
<div class="t" style="left:653px;top:381.05px;font-size:12.35px;color:#111">Smykkeforretningen</div>
<div class="t" style="left:933px;top:381.05px;font-size:12.35px;color:#111">Indland</div>
<div class="t" style="left:1018px;top:381.05px;font-size:12.35px;color:#111">DKK</div>
<div class="t" style="left:1075px;top:381.05px;font-size:12.35px;width:88px;text-align:right;color:#111">4.200,00</div>
<div class="t" style="left:1165px;top:381.05px;font-size:12.35px;width:88px;text-align:right;color:#111">1.050,00</div>
<div class="t" style="left:1255px;top:381.05px;font-size:12.35px;width:88px;text-align:right;color:#111">5.250,00</div>
<div class="t" style="left:1345px;top:381.05px;font-size:12.35px;width:123px;text-align:right;color:#111">5.250,00</div>
<div class="a" style="left:220px;top:403px;width:1600px;height:24px;background:#fff"></div>
<div class="a" style="left:220px;top:403px;width:55px;height:24px;background:#f4f4f4"></div>
<div class="a" style="left:220px;top:427px;width:1600px;height:1px;background:#c8c8c8"></div>
<div class="t" style="left:220px;top:406.63px;font-size:9px;width:52px;text-align:right;color:#7a7a7a">6</div>
<div class="t" style="left:278px;top:406.05px;font-size:12.35px;color:#111">21-06-2024</div>
<div class="t" style="left:368px;top:406.05px;font-size:12.35px;color:#111">29-06-2024</div>
<div class="t" style="left:455px;top:406.05px;font-size:12.35px;width:83px;text-align:right;color:#111">1010</div>
<div class="t" style="left:540px;top:406.05px;font-size:12.35px;width:108px;text-align:right;color:#111">48227519</div>
<div class="t" style="left:653px;top:406.05px;font-size:12.35px;color:#111">Time2Count</div>
<div class="t" style="left:933px;top:406.05px;font-size:12.35px;color:#111">Indland</div>
<div class="t" style="left:1018px;top:406.05px;font-size:12.35px;color:#111">DKK</div>
<div class="t" style="left:1075px;top:406.05px;font-size:12.35px;width:88px;text-align:right;color:#111">6.847,00</div>
<div class="t" style="left:1165px;top:406.05px;font-size:12.35px;width:88px;text-align:right;color:#111">1.711,75</div>
<div class="t" style="left:1255px;top:406.05px;font-size:12.35px;width:88px;text-align:right;color:#111">8.558,75</div>
<div class="a" style="left:220px;top:428px;width:1600px;height:24px;background:#fff"></div>
<div class="a" style="left:220px;top:428px;width:55px;height:24px;background:#f4f4f4"></div>
<div class="a" style="left:220px;top:452px;width:1600px;height:1px;background:#c8c8c8"></div>
<div class="t" style="left:220px;top:431.63px;font-size:9px;width:52px;text-align:right;color:#7a7a7a">7</div>
<div class="t" style="left:278px;top:431.05px;font-size:12.35px;color:#111">26-06-2024</div>
<div class="t" style="left:368px;top:431.05px;font-size:12.35px;color:#111">04-07-2024</div>
<div class="t" style="left:455px;top:431.05px;font-size:12.35px;width:83px;text-align:right;color:#111">1009</div>
<div class="t" style="left:540px;top:431.05px;font-size:12.35px;width:108px;text-align:right;color:#111">98765432</div>
<div class="t" style="left:653px;top:431.05px;font-size:12.35px;color:#111">Smykkeforretningen</div>
<div class="t" style="left:933px;top:431.05px;font-size:12.35px;color:#111">Indland</div>
<div class="t" style="left:1018px;top:431.05px;font-size:12.35px;color:#111">DKK</div>
<div class="t" style="left:1075px;top:431.05px;font-size:12.35px;width:88px;text-align:right;color:#111">7.648,00</div>
<div class="t" style="left:1165px;top:431.05px;font-size:12.35px;width:88px;text-align:right;color:#111">1.912,00</div>
<div class="t" style="left:1255px;top:431.05px;font-size:12.35px;width:88px;text-align:right;color:#111">9.560,00</div>
<div class="a" style="left:220px;top:453px;width:1600px;height:24px;background:#fff"></div>
<div class="a" style="left:220px;top:453px;width:55px;height:24px;background:#f4f4f4"></div>
<div class="a" style="left:220px;top:477px;width:1600px;height:1px;background:#c8c8c8"></div>
<div class="t" style="left:220px;top:456.63px;font-size:9px;width:52px;text-align:right;color:#7a7a7a">8</div>
<div class="t" style="left:278px;top:456.05px;font-size:12.35px;color:#111">17-05-2024</div>
<div class="t" style="left:368px;top:456.05px;font-size:12.35px;color:#111">25-05-2024</div>
<div class="t" style="left:455px;top:456.05px;font-size:12.35px;width:83px;text-align:right;color:#111">1008</div>
<div class="t" style="left:540px;top:456.05px;font-size:12.35px;width:108px;text-align:right;color:#111">48227519</div>
<div class="t" style="left:653px;top:456.05px;font-size:12.35px;color:#111">Time2Count</div>
<div class="t" style="left:933px;top:456.05px;font-size:12.35px;color:#111">Indland</div>
<div class="t" style="left:1018px;top:456.05px;font-size:12.35px;color:#111">DKK</div>
<div class="t" style="left:1075px;top:456.05px;font-size:12.35px;width:88px;text-align:right;color:#111">2.380,00</div>
<div class="t" style="left:1165px;top:456.05px;font-size:12.35px;width:88px;text-align:right;color:#111">595,00</div>
<div class="t" style="left:1255px;top:456.05px;font-size:12.35px;width:88px;text-align:right;color:#111">2.975,00</div>
<div class="a" style="left:220px;top:478px;width:1600px;height:24px;background:#fff"></div>
<div class="a" style="left:220px;top:478px;width:55px;height:24px;background:#f4f4f4"></div>
<div class="a" style="left:220px;top:502px;width:1600px;height:1px;background:#c8c8c8"></div>
<div class="t" style="left:220px;top:481.63px;font-size:9px;width:52px;text-align:right;color:#7a7a7a">9</div>
<div class="t" style="left:278px;top:481.05px;font-size:12.35px;color:#111">03-05-2024</div>
<div class="t" style="left:368px;top:481.05px;font-size:12.35px;color:#111">11-05-2024</div>
<div class="t" style="left:455px;top:481.05px;font-size:12.35px;width:83px;text-align:right;color:#111">1007</div>
<div class="t" style="left:540px;top:481.05px;font-size:12.35px;width:108px;text-align:right;color:#111">32165498</div>
<div class="t" style="left:653px;top:481.05px;font-size:12.35px;color:#111">NEM Rengøring</div>
<div class="t" style="left:933px;top:481.05px;font-size:12.35px;color:#111">Indland</div>
<div class="t" style="left:1018px;top:481.05px;font-size:12.35px;color:#111">DKK</div>
<div class="t" style="left:1075px;top:481.05px;font-size:12.35px;width:88px;text-align:right;color:#111">1.800,00</div>
<div class="t" style="left:1165px;top:481.05px;font-size:12.35px;width:88px;text-align:right;color:#111">450,00</div>
<div class="t" style="left:1255px;top:481.05px;font-size:12.35px;width:88px;text-align:right;color:#111">2.250,00</div>
<div class="a" style="left:220px;top:503px;width:1600px;height:24px;background:#fff"></div>
<div class="a" style="left:220px;top:503px;width:55px;height:24px;background:#f4f4f4"></div>
<div class="a" style="left:220px;top:527px;width:1600px;height:1px;background:#c8c8c8"></div>
<div class="t" style="left:220px;top:506.63px;font-size:9px;width:52px;text-align:right;color:#7a7a7a">10</div>
<div class="t" style="left:278px;top:506.05px;font-size:12.35px;color:#111">26-03-2024</div>
<div class="t" style="left:368px;top:506.05px;font-size:12.35px;color:#111">03-04-2024</div>
<div class="t" style="left:455px;top:506.05px;font-size:12.35px;width:83px;text-align:right;color:#111">1006</div>
<div class="t" style="left:540px;top:506.05px;font-size:12.35px;width:108px;text-align:right;color:#111">98765432</div>
<div class="t" style="left:653px;top:506.05px;font-size:12.35px;color:#111">Smykkeforretningen</div>
<div class="t" style="left:933px;top:506.05px;font-size:12.35px;color:#111">Indland</div>
<div class="t" style="left:1018px;top:506.05px;font-size:12.35px;color:#111">DKK</div>
<div class="t" style="left:1075px;top:506.05px;font-size:12.35px;width:88px;text-align:right;color:#111">5.268,90</div>
<div class="t" style="left:1165px;top:506.05px;font-size:12.35px;width:88px;text-align:right;color:#111">1.317,23</div>
<div class="t" style="left:1255px;top:506.05px;font-size:12.35px;width:88px;text-align:right;color:#111">6.586,13</div>
<div class="a" style="left:220px;top:528px;width:1600px;height:24px;background:#fff"></div>
<div class="a" style="left:220px;top:528px;width:55px;height:24px;background:#f4f4f4"></div>
<div class="a" style="left:220px;top:552px;width:1600px;height:1px;background:#c8c8c8"></div>
<div class="t" style="left:220px;top:531.63px;font-size:9px;width:52px;text-align:right;color:#7a7a7a">11</div>
<div class="t" style="left:278px;top:531.05px;font-size:12.35px;color:#111">17-03-2024</div>
<div class="t" style="left:368px;top:531.05px;font-size:12.35px;color:#111">25-03-2024</div>
<div class="t" style="left:455px;top:531.05px;font-size:12.35px;width:83px;text-align:right;color:#111">1005</div>
<div class="t" style="left:540px;top:531.05px;font-size:12.35px;width:108px;text-align:right;color:#111">48227519</div>
<div class="t" style="left:653px;top:531.05px;font-size:12.35px;color:#111">Time2Count</div>
<div class="t" style="left:933px;top:531.05px;font-size:12.35px;color:#111">Indland</div>
<div class="t" style="left:1018px;top:531.05px;font-size:12.35px;color:#111">DKK</div>
<div class="t" style="left:1075px;top:531.05px;font-size:12.35px;width:88px;text-align:right;color:#111">13.634,00</div>
<div class="t" style="left:1165px;top:531.05px;font-size:12.35px;width:88px;text-align:right;color:#111">3.408,50</div>
<div class="t" style="left:1255px;top:531.05px;font-size:12.35px;width:88px;text-align:right;color:#111">17.042,50</div>
<div class="a" style="left:220px;top:553px;width:1600px;height:24px;background:#fff"></div>
<div class="a" style="left:220px;top:553px;width:55px;height:24px;background:#f4f4f4"></div>
<div class="a" style="left:220px;top:577px;width:1600px;height:1px;background:#c8c8c8"></div>
<div class="t" style="left:220px;top:556.63px;font-size:9px;width:52px;text-align:right;color:#7a7a7a">12</div>
<div class="t" style="left:278px;top:556.05px;font-size:12.35px;color:#111">06-03-2024</div>
<div class="t" style="left:368px;top:556.05px;font-size:12.35px;color:#111">14-03-2024</div>
<div class="t" style="left:455px;top:556.05px;font-size:12.35px;width:83px;text-align:right;color:#111">1004</div>
<div class="t" style="left:540px;top:556.05px;font-size:12.35px;width:108px;text-align:right;color:#111">32165498</div>
<div class="t" style="left:653px;top:556.05px;font-size:12.35px;color:#111">NEM Rengøring</div>
<div class="t" style="left:933px;top:556.05px;font-size:12.35px;color:#111">Indland</div>
<div class="t" style="left:1018px;top:556.05px;font-size:12.35px;color:#111">DKK</div>
<div class="t" style="left:1075px;top:556.05px;font-size:12.35px;width:88px;text-align:right;color:#111">1.874,35</div>
<div class="t" style="left:1165px;top:556.05px;font-size:12.35px;width:88px;text-align:right;color:#111">468,59</div>
<div class="t" style="left:1255px;top:556.05px;font-size:12.35px;width:88px;text-align:right;color:#111">2.342,94</div>
<div class="a" style="left:220px;top:578px;width:1600px;height:24px;background:#fff"></div>
<div class="a" style="left:220px;top:578px;width:55px;height:24px;background:#f4f4f4"></div>
<div class="a" style="left:220px;top:602px;width:1600px;height:1px;background:#c8c8c8"></div>
<div class="t" style="left:220px;top:581.63px;font-size:9px;width:52px;text-align:right;color:#7a7a7a">13</div>
<div class="t" style="left:278px;top:581.05px;font-size:12.35px;color:#111">20-02-2024</div>
<div class="t" style="left:368px;top:581.05px;font-size:12.35px;color:#111">28-02-2024</div>
<div class="t" style="left:455px;top:581.05px;font-size:12.35px;width:83px;text-align:right;color:#111">1003</div>
<div class="t" style="left:540px;top:581.05px;font-size:12.35px;width:108px;text-align:right;color:#111">32165498</div>
<div class="t" style="left:653px;top:581.05px;font-size:12.35px;color:#111">NEM Rengøring</div>
<div class="t" style="left:933px;top:581.05px;font-size:12.35px;color:#111">Indland</div>
<div class="t" style="left:1018px;top:581.05px;font-size:12.35px;color:#111">DKK</div>
<div class="t" style="left:1075px;top:581.05px;font-size:12.35px;width:88px;text-align:right;color:#111">1.200,00</div>
<div class="t" style="left:1165px;top:581.05px;font-size:12.35px;width:88px;text-align:right;color:#111">300,00</div>
<div class="t" style="left:1255px;top:581.05px;font-size:12.35px;width:88px;text-align:right;color:#111">1.500,00</div>
<div class="a" style="left:220px;top:603px;width:1600px;height:24px;background:#fff"></div>
<div class="a" style="left:220px;top:603px;width:55px;height:24px;background:#f4f4f4"></div>
<div class="a" style="left:220px;top:627px;width:1600px;height:1px;background:#c8c8c8"></div>
<div class="t" style="left:220px;top:606.63px;font-size:9px;width:52px;text-align:right;color:#7a7a7a">14</div>
<div class="t" style="left:278px;top:606.05px;font-size:12.35px;color:#111">18-01-2024</div>
<div class="t" style="left:368px;top:606.05px;font-size:12.35px;color:#111">26-01-2024</div>
<div class="t" style="left:455px;top:606.05px;font-size:12.35px;width:83px;text-align:right;color:#111">1002</div>
<div class="t" style="left:540px;top:606.05px;font-size:12.35px;width:108px;text-align:right;color:#111">48227519</div>
<div class="t" style="left:653px;top:606.05px;font-size:12.35px;color:#111">Time2Count</div>
<div class="t" style="left:933px;top:606.05px;font-size:12.35px;color:#111">Indland</div>
<div class="t" style="left:1018px;top:606.05px;font-size:12.35px;color:#111">DKK</div>
<div class="t" style="left:1075px;top:606.05px;font-size:12.35px;width:88px;text-align:right;color:#111">4.519,00</div>
<div class="t" style="left:1165px;top:606.05px;font-size:12.35px;width:88px;text-align:right;color:#111">1.129,75</div>
<div class="t" style="left:1255px;top:606.05px;font-size:12.35px;width:88px;text-align:right;color:#111">5.648,75</div>
<div class="a" style="left:220px;top:628px;width:1600px;height:24px;background:#fff"></div>
<div class="a" style="left:220px;top:628px;width:55px;height:24px;background:#f4f4f4"></div>
<div class="a" style="left:220px;top:652px;width:1600px;height:1px;background:#c8c8c8"></div>
<div class="t" style="left:220px;top:631.63px;font-size:9px;width:52px;text-align:right;color:#7a7a7a">15</div>
<div class="t" style="left:278px;top:631.05px;font-size:12.35px;color:#111">10-01-2024</div>
<div class="t" style="left:368px;top:631.05px;font-size:12.35px;color:#111">18-01-2024</div>
<div class="t" style="left:455px;top:631.05px;font-size:12.35px;width:83px;text-align:right;color:#111">1001</div>
<div class="t" style="left:540px;top:631.05px;font-size:12.35px;width:108px;text-align:right;color:#111">98765432</div>
<div class="t" style="left:653px;top:631.05px;font-size:12.35px;color:#111">Smykkeforretningen</div>
<div class="t" style="left:933px;top:631.05px;font-size:12.35px;color:#111">Indland</div>
<div class="t" style="left:1018px;top:631.05px;font-size:12.35px;color:#111">DKK</div>
<div class="t" style="left:1075px;top:631.05px;font-size:12.35px;width:88px;text-align:right;color:#111">3.813,26</div>
<div class="t" style="left:1165px;top:631.05px;font-size:12.35px;width:88px;text-align:right;color:#111">953,32</div>
<div class="t" style="left:1255px;top:631.05px;font-size:12.35px;width:88px;text-align:right;color:#111">4.766,58</div>
<div class="a" style="left:220px;top:653px;width:1600px;height:24px;background:#fff"></div>
<div class="a" style="left:220px;top:653px;width:55px;height:24px;background:#f4f4f4"></div>
<div class="a" style="left:220px;top:677px;width:1600px;height:1px;background:#c8c8c8"></div>
<div class="a" style="left:275px;top:278px;width:0;height:400px;border-left:1px dotted #b5b5b5"></div>
<div class="a" style="left:365px;top:278px;width:0;height:400px;border-left:1px dotted #b5b5b5"></div>
<div class="a" style="left:455px;top:278px;width:0;height:400px;border-left:1px dotted #b5b5b5"></div>
<div class="a" style="left:540px;top:278px;width:0;height:400px;border-left:1px dotted #b5b5b5"></div>
<div class="a" style="left:650px;top:278px;width:0;height:400px;border-left:1px dotted #b5b5b5"></div>
<div class="a" style="left:930px;top:278px;width:0;height:400px;border-left:1px dotted #b5b5b5"></div>
<div class="a" style="left:1015px;top:278px;width:0;height:400px;border-left:1px dotted #b5b5b5"></div>
<div class="a" style="left:1075px;top:278px;width:0;height:400px;border-left:1px dotted #b5b5b5"></div>
<div class="a" style="left:1165px;top:278px;width:0;height:400px;border-left:1px dotted #b5b5b5"></div>
<div class="a" style="left:1255px;top:278px;width:0;height:400px;border-left:1px dotted #b5b5b5"></div>
<div class="a" style="left:1345px;top:278px;width:0;height:400px;border-left:1px dotted #b5b5b5"></div>
<div class="a" style="left:1470px;top:278px;width:0;height:400px;border-left:1px dotted #b5b5b5"></div>
<div class="a" style="left:1590px;top:278px;width:0;height:400px;border-left:1px dotted #b5b5b5"></div>
<div class="a" style="left:1750px;top:278px;width:0;height:400px;border-left:1px dotted #b5b5b5"></div>
<div class="a" style="left:1820px;top:278px;width:0;height:400px;border-left:1px dotted #b5b5b5"></div>
<div class="a" style="left:276px;top:278px;width:90px;height:25px;border:1.5px solid #000;background:#fff;z-index:1"></div>
<div class="t" style="left:278px;top:281.05px;font-size:12.35px;color:#111;z-index:2">12-08-2024</div>
<div class="a" style="left:1840px;top:278px;width:17px;height:638px;background:#efefef"></div>
<div class="a" style="left:1842px;top:295px;width:13px;height:378px;background:#c1c1c1"></div>
<svg class="a" style="left:1844px;top:283.5px" width="9" height="6" viewBox="0 0 9 6"><path d="M0.5 5.2h8L4.5 1z" fill="#8d918d"/></svg>
<svg class="a" style="left:1844px;top:906px" width="9" height="6" viewBox="0 0 9 6"><path d="M0.5 0.5h8L4.5 5z" fill="#484850"/></svg>
<svg class="a" style="left:664px;top:843px" width="14" height="21" viewBox="0 0 14 21"><path d="M1.5 1.2v15.5l3.7-3.6 2.6 6.2 2.5-1-2.6-6.1h5.2z" fill="#fff" stroke="#111" stroke-width="1.1" stroke-linejoin="round"/></svg>
</body></html>
